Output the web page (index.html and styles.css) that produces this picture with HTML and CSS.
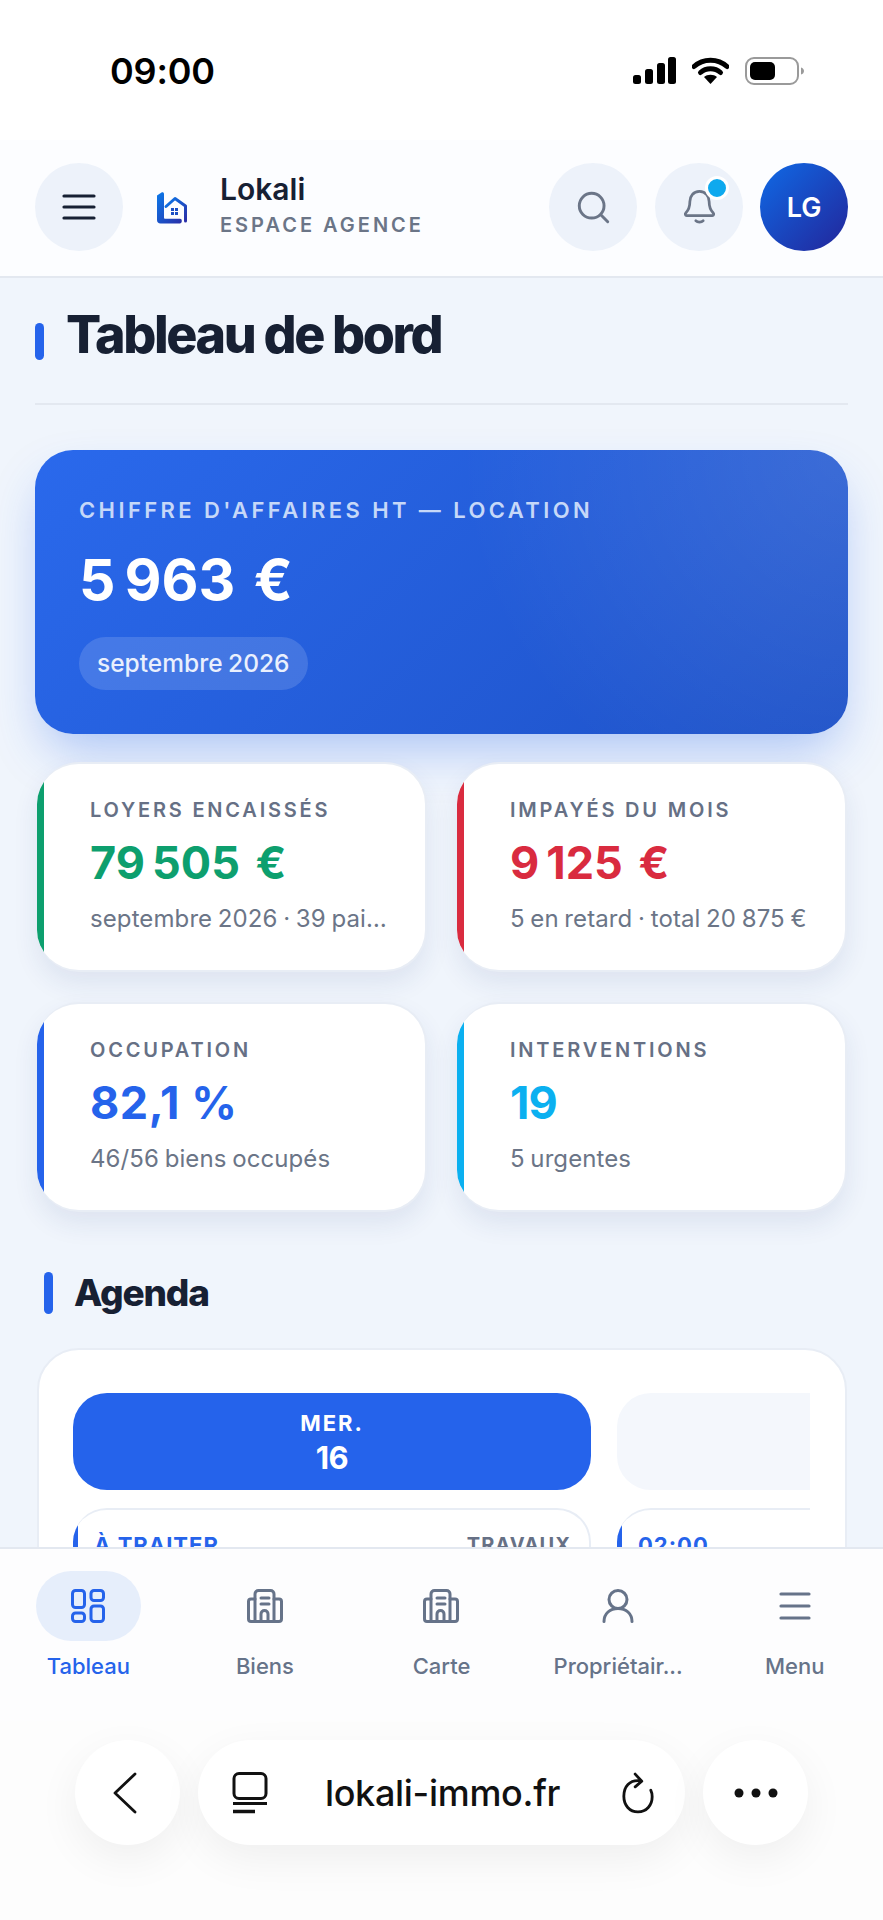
FILE: index.html
```html
<!DOCTYPE html>
<html lang="fr">
<head>
  <meta charset="UTF-8">
  <meta name="viewport" content="width=device-width, initial-scale=1.0">
  <title>Lokali - Tableau de bord</title>
  <link rel="stylesheet" href="styles.css">
</head>
<body>
  <div class="phone">
    <div class="statusbar">
      <span class="time">09:00</span>
      <div class="status-icons">
        <svg width="43" height="27" viewBox="0 0 43 27"><rect x="0" y="18" width="8" height="9" rx="2.5"/><rect x="12" y="12" width="8" height="15" rx="2.5"/><rect x="24" y="6" width="8" height="21" rx="2.5"/><rect x="35" y="0" width="8" height="27" rx="2.5"/></svg>
        <svg width="37" height="27" viewBox="0 0 37 27"><path d="M2 9.5C11 1 26 1 35 9.5" fill="none" stroke="#000" stroke-width="5" stroke-linecap="round"/><path d="M8.5 15.5c5.5-5 14.500-5 20 0" fill="none" stroke="#000" stroke-width="5" stroke-linecap="round"/><path d="M18.500 27l-6.500-7c3.500-3 9.500-3 13 0z"/></svg>
        <svg width="60" height="28" viewBox="0 0 60 28"><rect x="1" y="1" width="52" height="26" rx="8" fill="none" stroke="#9a9a9a" stroke-width="2"/><rect x="5" y="5" width="25" height="18" rx="5"/><path d="M56 10.500c2 .5 3 2 3 3.500s-1 3-3 3.500z" fill="#9a9a9a"/></svg>
      </div>
    </div>

    <header class="topbar">
      <button class="round-btn menu-btn">
        <svg width="36" height="30" viewBox="0 0 36 30"><path d="M3 4h30M3 15h30M3 26h30" stroke="#172033" stroke-width="3.200" stroke-linecap="round"/></svg>
      </button>
      <svg class="logo" width="31" height="32" viewBox="0 0 31 32">
        <defs><linearGradient id="logoGrad" x1="0" y1="0" x2="1" y2="1"><stop offset="0" stop-color="#0b79ea"/><stop offset="1" stop-color="#2a2fa8"/></linearGradient></defs>
        <path d="M0 3.500L4.500.5C6 0 7 .8 7 2v23.500c0 .8.500 1.300 1.200 1.300H23c1.200 0 1.800.8 1.800 2.200 0 1.400-.8 2.500-2 2.500H3.500C1.300 31.500 0 30 0 28z" fill="url(#logoGrad)"/>
        <path d="M9 14.500L18 6.500l10.500 7.500v15" fill="none" stroke="url(#logoGrad)" stroke-width="3" stroke-linecap="round" stroke-linejoin="round"/>
        <path d="M14 16h3v3h-3zM18 16h3v3h-3zM14 20h3v3h-3zM18 20h3v3h-3z" fill="#1b4fc4"/>
      </svg>
      <div class="brand">
        <div class="brand-name">Lokali</div>
        <div class="brand-sub">ESPACE AGENCE</div>
      </div>
      <button class="round-btn search-btn">
        <svg width="33" height="33" viewBox="0 0 36 36"><circle cx="16" cy="16" r="13.500" fill="none" stroke="#6b7587" stroke-width="3.200"/><path d="M26.500 26.500l7 7" stroke="#6b7587" stroke-width="3.200" stroke-linecap="round"/></svg>
      </button>
      <button class="round-btn bell-btn">
        <svg width="33" height="36" viewBox="0 0 36 38"><path d="M18 2C11 2 7.500 7.500 7.500 13c0 7-2 10-4.500 12.500-1 1-.5 3 1 3h28c1.500 0 2-2 1-3C30.500 23 28.500 20 28.500 13 28.500 7.500 25 2 18 2z" fill="none" stroke="#6b7587" stroke-width="3" stroke-linejoin="round"/><path d="M14 34c2 2 6 2 8 0" fill="none" stroke="#6b7587" stroke-width="3" stroke-linecap="round"/></svg>
        <span class="bell-dot"></span>
      </button>
      <div class="avatar">LG</div>
    </header>

    <main class="content">
      <div class="page-title">
        <span class="accent big"></span>
        <h1>Tableau de bord</h1>
      </div>

      <section class="hero">
        <div class="hero-label">CHIFFRE D'AFFAIRES HT — LOCATION</div>
        <div class="hero-value">5&#8239;963 €</div>
        <span class="chip">septembre 2026</span>
      </section>

      <section class="stats">
        <div class="stat green">
          <div class="stat-label">LOYERS ENCAISSÉS</div>
          <div class="stat-value">79&#8239;505 €</div>
          <div class="stat-sub">septembre 2026 · 39 paiements</div>
        </div>
        <div class="stat red">
          <div class="stat-label">IMPAYÉS DU MOIS</div>
          <div class="stat-value">9&#8239;125 €</div>
          <div class="stat-sub">5 en retard · total 20 875 €</div>
        </div>
        <div class="stat blue">
          <div class="stat-label">OCCUPATION</div>
          <div class="stat-value">82,1 %</div>
          <div class="stat-sub">46/56 biens occupés</div>
        </div>
        <div class="stat cyan">
          <div class="stat-label">INTERVENTIONS</div>
          <div class="stat-value">19</div>
          <div class="stat-sub">5 urgentes</div>
        </div>
      </section>

      <div class="section-title">
        <span class="accent"></span>
        <h2>Agenda</h2>
      </div>

      <section class="agenda">
        <div class="agenda-row days">
          <div class="day active">
            <span class="day-name">MER.</span>
            <span class="day-num">16</span>
          </div>
          <div class="day"></div>
        </div>
        <div class="agenda-row tasks">
          <div class="task">
            <span class="task-status">À TRAITER</span>
            <span class="task-type">TRAVAUX</span>
          </div>
          <div class="task">
            <span class="task-status">02:00</span>
          </div>
        </div>
      </section>
    </main>

    <nav class="tabbar">
      <div class="tab active">
        <span class="tab-icon">
          <svg width="34" height="34" viewBox="0 0 34 34" fill="none" stroke="#2563eb" stroke-width="3"><rect x="1.500" y="1.500" width="12" height="17" rx="3"/><rect x="20" y="1.500" width="12.500" height="10" rx="3"/><rect x="1.500" y="24" width="12" height="8.500" rx="3"/><rect x="20" y="17" width="12.500" height="15.500" rx="3"/></svg>
        </span>
        <span class="tab-label">Tableau</span>
      </div>
      <div class="tab">
        <span class="tab-icon">
          <svg width="36" height="34" viewBox="0 0 36 34" fill="none" stroke="#667389" stroke-width="3" stroke-linejoin="round" stroke-linecap="round"><path d="M8 32.500V5c0-2 1.500-3.500 3.500-3.500h12c2 0 3.500 1.500 3.500 3.500v27.500"/><path d="M8 10H4C2.500 10 1.500 11 1.500 12.500V30c0 1.500 1 2.500 2.500 2.500h28c1.500 0 2.500-1 2.500-2.500V12.500c0-1.500-1-2.500-2.500-2.500h-5"/><path d="M14 9h8M14 15h8M14 32.500V25c0-2 1.500-3.500 3.500-3.500s3.500 1.500 3.500 3.500v7.500"/></svg>
        </span>
        <span class="tab-label">Biens</span>
      </div>
      <div class="tab">
        <span class="tab-icon">
          <svg width="36" height="34" viewBox="0 0 36 34" fill="none" stroke="#667389" stroke-width="3" stroke-linejoin="round" stroke-linecap="round"><path d="M8 32.500V5c0-2 1.500-3.500 3.500-3.500h12c2 0 3.500 1.500 3.500 3.500v27.500"/><path d="M8 10H4C2.500 10 1.500 11 1.500 12.500V30c0 1.500 1 2.500 2.500 2.500h28c1.500 0 2.500-1 2.500-2.500V12.500c0-1.500-1-2.500-2.500-2.500h-5"/><path d="M14 9h8M14 15h8M14 32.500V25c0-2 1.500-3.500 3.500-3.500s3.500 1.500 3.500 3.500v7.500"/></svg>
        </span>
        <span class="tab-label">Carte</span>
      </div>
      <div class="tab">
        <span class="tab-icon">
          <svg width="32" height="34" viewBox="0 0 32 34" fill="none" stroke="#667389" stroke-width="3" stroke-linecap="round"><circle cx="16" cy="10.500" r="9"/><path d="M2 32.500c0-8 6-13 14-13s14 5 14 13"/></svg>
        </span>
        <span class="tab-label">Propriétair...</span>
      </div>
      <div class="tab">
        <span class="tab-icon">
          <svg width="32" height="30" viewBox="0 0 32 30" fill="none" stroke="#667389" stroke-width="3.200" stroke-linecap="round"><path d="M2 3h28M2 15h28M2 27h28"/></svg>
        </span>
        <span class="tab-label">Menu</span>
      </div>
    </nav>

    <div class="browserbar">
      <div class="browser-btn back-btn">
        <svg width="26" height="42" viewBox="0 0 26 42" fill="none" stroke="#111" stroke-width="2.800" stroke-linecap="round" stroke-linejoin="round"><path d="M23 2L3 21l20 19"/></svg>
      </div>
      <div class="url-pill">
        <svg width="36" height="42" viewBox="0 0 36 42" fill="none" stroke="#111"><rect x="2" y="1.500" width="32" height="25" rx="5" stroke-width="3"/><path d="M1 31.500h34" stroke-width="3"/><path d="M1 39.500h22" stroke-width="3.500"/></svg>
        <span class="url-text">lokali-immo.fr</span>
        <svg width="34" height="42" viewBox="0 0 36 44" fill="none" stroke="#111" stroke-width="3" stroke-linecap="round" stroke-linejoin="round"><path d="M20 9C9 8 3 15 3 25.500 3 35 9 42 18 42s15-7 15-16c0-3-.5-5-1.500-7"/><path d="M15 2l7 7.500-7 6"/></svg>
      </div>
      <div class="browser-btn">
        <svg width="44" height="10" viewBox="0 0 44 10" fill="#111"><circle cx="5" cy="5" r="4.500"/><circle cx="22" cy="5" r="4.500"/><circle cx="39" cy="5" r="4.500"/></svg>
      </div>
    </div>
  </div>
</body>
</html>
```

FILE: styles.css
```css
* { box-sizing: border-box; }
html, body { margin: 0; padding: 0; }
body { background: #fff; color: #172033; font-family: Inter, "Liberation Sans", sans-serif; }
h1, h2 { margin: 0; }
button { border: none; padding: 0; font: inherit; }

.phone { display: flex; flex-direction: column; width: 883px; height: 1920px; overflow: hidden; background: #fff; }

/* status bar */
.statusbar { flex: 0 0 140px; display: flex; justify-content: space-between; padding: 50px 78px 0 110px; background: #fff; }
.time { font-size: 36px; line-height: 42px; font-weight: 600; color: #000; letter-spacing: -.2px; }
.status-icons { display: flex; gap: 16px; height: 28px; margin-top: 7px; }
.status-icons svg { display: block; }

/* header */
.topbar { flex: 0 0 138px; display: flex; align-items: center; padding: 0 35px 2px; background: #fcfdff; border-bottom: 2px solid #e3e8f0; }
.round-btn { position: relative; display: flex; flex: 0 0 88px; align-items: center; justify-content: center; height: 88px; border-radius: 50%; background: #edf2fa; }
.logo { margin-left: 34px; margin-top: 2px; }
.brand { margin-left: 32px; flex: 1; margin-top: -6px; }
.brand-name { font-size: 30px; line-height: 38px; font-weight: 600; color: #172033; }
.brand-sub { font-size: 20px; line-height: 26px; margin-top: 4px; font-weight: 600; color: #6b7587; letter-spacing: 3px; }
.search-btn { margin-right: 18px; }
.bell-btn { margin-right: 17px; }
.bell-dot { position: absolute; top: 13px; right: 14px; width: 18px; height: 18px; border-radius: 50%; background: #0ea9ee; border: 3px solid #fff; box-sizing: content-box; }
.avatar { display: flex; flex: 0 0 88px; align-items: center; justify-content: center; height: 88px; border-radius: 50%; background: linear-gradient(135deg, #0f6ae6, #23259a); color: #fff; font-size: 27px; font-weight: 600; }

/* content */
.content { flex: 0 0 1269px; overflow: hidden; padding: 0 35px; background: #f0f5fc; }
.page-title { display: flex; align-items: center; gap: 22px; height: 127px; padding-bottom: 13px; border-bottom: 2px solid #e3e8f0; }
.page-title h1 { font-size: 52px; line-height: 60px; font-weight: 800; letter-spacing: -2.400px; color: #172033; margin-top: 2px; }
.accent { display: block; flex: 0 0 9px; height: 42px; border-radius: 5px; background: #2563eb; }
.accent.big { height: 37px; margin-top: 15px; }

.hero { height: 284px; margin-top: 45px; padding: 46px 44px 0; border-radius: 38px; color: #fff; background: radial-gradient(circle at 100% 0, rgba(255,255,255,.12), rgba(255,255,255,0) 45%), linear-gradient(135deg, #2a69ec, #1e52c8); box-shadow: 0 24px 50px -10px rgba(37,99,235,.35); }
.hero-label { font-size: 22px; line-height: 28px; font-weight: 600; letter-spacing: 3.400px; color: #c6d8f8; white-space: nowrap; }
.hero-value { font-size: 57px; line-height: 68px; margin-top: 22px; font-weight: 700; letter-spacing: 2.400px; word-spacing: 5px; }
.chip { display: inline-block; height: 53px; line-height: 52px; margin-top: 23px; padding: 0 18px; border-radius: 27px; background: rgba(255,255,255,.14); font-size: 24.500px; font-weight: 500; word-spacing: -1px; color: #eaf0fd; }

.stats { display: grid; grid-template-columns: 390px 390px; gap: 30px; margin: 28px 2px 0; }
.stat { position: relative; height: 210px; min-width: 0; overflow: hidden; padding: 33px 26px 0 53px; background: #fff; border: 2px solid #e8edf5; border-left-width: 0; border-radius: 42px; box-shadow: 0 12px 26px rgba(30,60,120,.09); }
.stat::before { content: ""; position: absolute; top: 0; bottom: 0; left: 0; width: 7px; }
.green::before { background: #0d9f6e; }
.red::before { background: #d92b3f; }
.blue::before { background: #2563eb; }
.cyan::before { background: #0bb0f0; }
.stat-label { font-size: 20px; line-height: 26px; font-weight: 600; letter-spacing: 2.800px; color: #667085; white-space: nowrap; }
.stat-value { font-size: 45px; line-height: 54px; margin-top: 13px; font-weight: 700; letter-spacing: .5px; word-spacing: 5px; white-space: nowrap; }
.green .stat-value { color: #0d9f6e; }
.red .stat-value { color: #d92b3f; }
.blue .stat-value { color: #2563eb; word-spacing: 0; }
.cyan .stat-value { color: #0bb0f0; letter-spacing: -1px; }
.stat-sub { font-size: 24px; line-height: 30px; margin-top: 14px; color: #6b7587; letter-spacing: .1px; word-spacing: -1.200px; white-space: nowrap; overflow: hidden; text-overflow: ellipsis; }

.section-title { display: flex; align-items: center; gap: 21px; margin: 60px 0 0 9px; height: 42px; }
.section-title h2 { font-size: 37px; line-height: 42px; font-weight: 800; letter-spacing: -1.200px; color: #172033; }

.agenda { margin: 34px 1px 0 2px; padding: 43px 34px 0; height: 300px; background: #fff; border: 2px solid #e8edf5; border-radius: 42px; }
.agenda-row { display: flex; gap: 26px; width: 737px; overflow: hidden; }
.day { display: flex; flex: 0 0 518px; flex-direction: column; align-items: center; height: 97px; padding-top: 16px; border-radius: 34px; background: #f4f7fc; }
.day.active { background: #2563eb; color: #fff; }
.day-name { font-size: 22px; line-height: 28px; font-weight: 700; letter-spacing: 2px; }
.day-num { font-size: 31px; line-height: 42px; font-weight: 700; letter-spacing: -.5px; }
.tasks { margin-top: 18px; }
.task { position: relative; display: flex; flex: 0 0 518px; justify-content: space-between; height: 120px; overflow: hidden; padding: 20px 18px 0 21px; border: 2px solid #e8edf5; border-left-width: 0; border-radius: 34px; }
.task::before { content: ""; position: absolute; top: 0; bottom: 0; left: 0; width: 5px; background: #2563eb; }
.task-status { font-size: 22px; line-height: 30px; font-weight: 700; letter-spacing: 1px; color: #2563eb; }
.task-type { font-size: 20px; line-height: 30px; font-weight: 700; letter-spacing: 1px; color: #667085; }

/* bottom nav */
.tabbar { flex: 0 0 174px; display: grid; grid-template-columns: repeat(5, 1fr); padding: 22px 0 0; background: #fdfdfe; border-top: 2px solid #e3e8f0; }
.tab { display: flex; flex-direction: column; align-items: center; min-width: 0; }
.tab-icon { display: flex; align-items: center; justify-content: center; width: 105px; height: 70px; border-radius: 35px; }
.tab.active .tab-icon { background: #e6eefb; }
.tab-label { font-size: 22px; line-height: 28px; margin-top: 11px; font-weight: 500; color: #667389; white-space: nowrap; }
.tab.active .tab-label { color: #2563eb; }

/* browser bar */
.browserbar { flex: 1; display: flex; gap: 18px; justify-content: center; padding-top: 19px; background: #fdfdfd; }
.browser-btn, .url-pill { display: flex; align-items: center; height: 105px; border-radius: 53px; background: #fff; box-shadow: 0 14px 44px rgba(0,0,0,.06); }
.browser-btn { justify-content: center; width: 105px; }
.back-btn svg { margin-right: 6px; }
.url-pill { justify-content: space-between; width: 487px; padding: 0 30px 0 34px; }
.url-text { margin-right: 4px; font-size: 36px; font-weight: 500; color: #111; letter-spacing: -.3px; }
```
